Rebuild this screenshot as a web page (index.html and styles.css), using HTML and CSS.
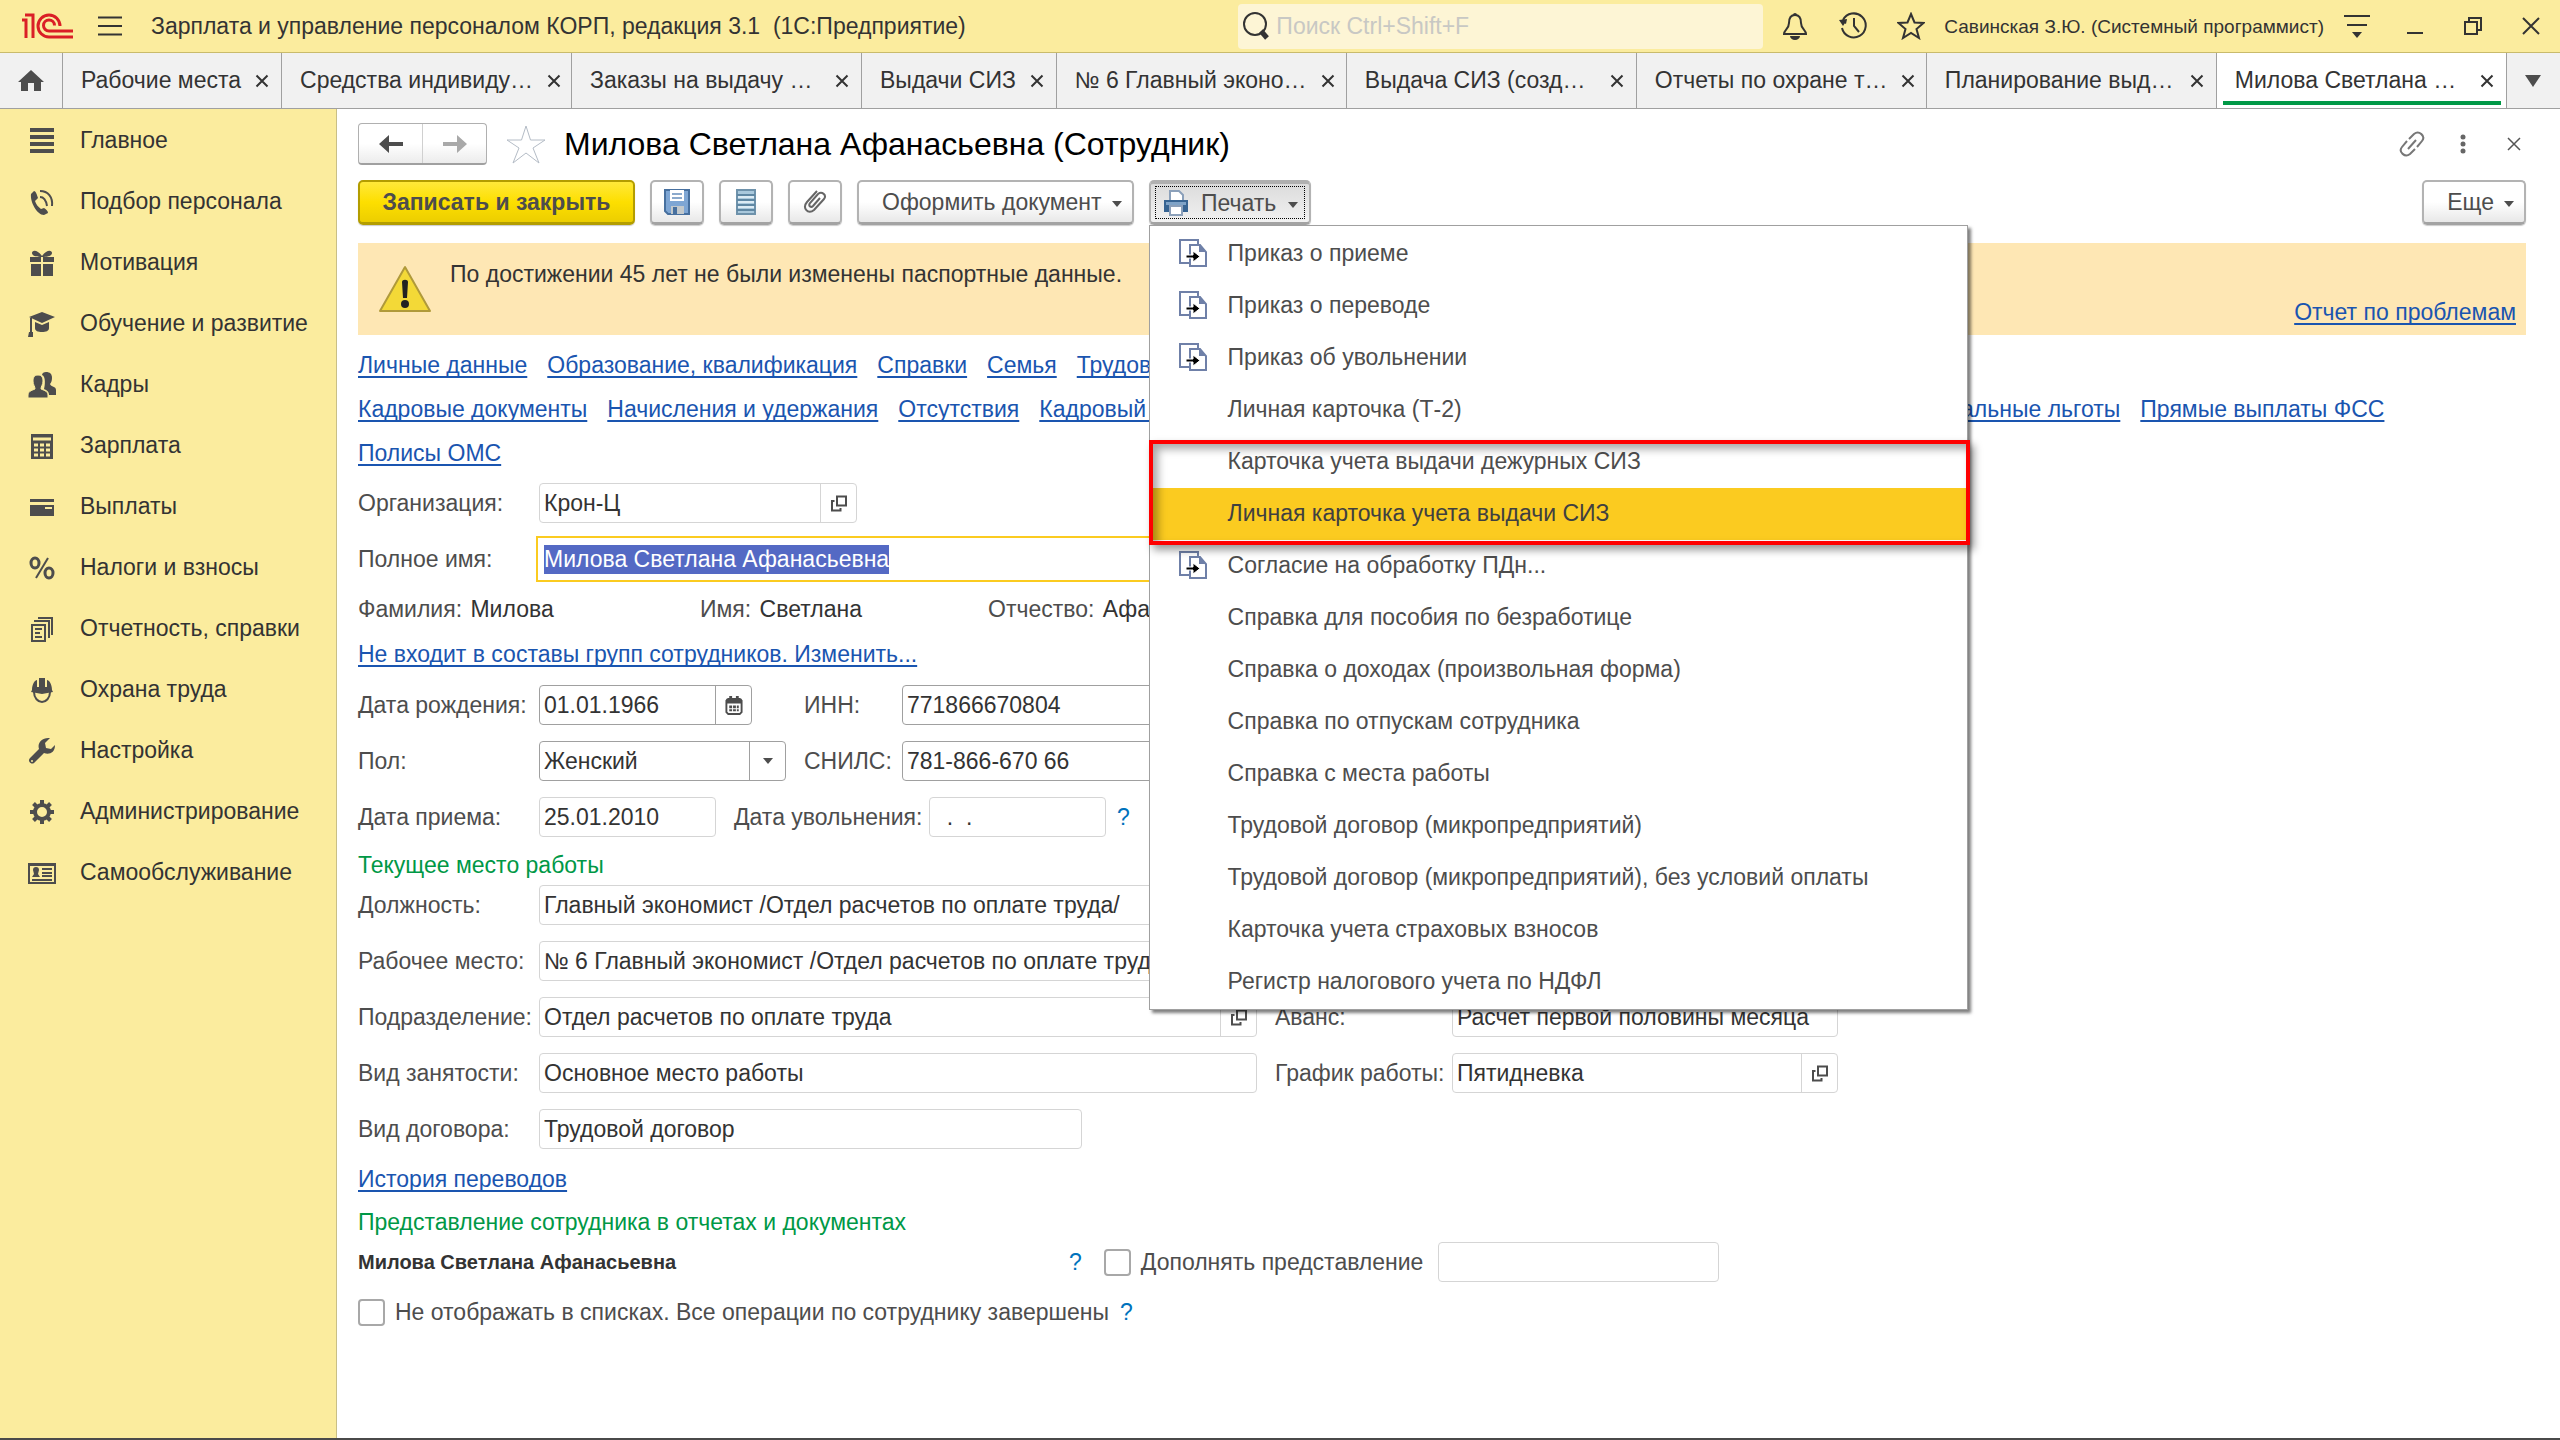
FILE: index.html
```html
<!DOCTYPE html>
<html lang="ru">
<head>
    <meta charset="UTF-8">
    <meta name="viewport" content="width=device-width, initial-scale=1.0">
    <title>Милова Светлана Афанасьевна (Сотрудник)</title>
    <link rel="stylesheet" href="styles.css">
</head>
<body>
    <!-- Общие значки -->
    <svg class="sprite" aria-hidden="true">
        <symbol id="i-close" viewBox="0 0 14 14"><path d="M1.5 1.5l11 11M12.5 1.5l-11 11" fill="none" stroke="currentColor" stroke-width="2"/></symbol>
        <symbol id="i-open" viewBox="0 0 18 18"><path d="M7 2h9v9H7z" fill="none" stroke="currentColor" stroke-width="2"/><path d="M4.500 6.500H2V16h8.500v-2.500" fill="none" stroke="currentColor" stroke-width="2"/></symbol>
        <symbol id="i-down" viewBox="0 0 10 6"><path d="M0 0h10L5 6z" fill="currentColor"/></symbol>
        <symbol id="i-print-doc" viewBox="0 0 28 28">
            <path d="M10 24H1V1h18v4" fill="none" stroke="#6f80a8" stroke-width="2"/>
            <path d="M11 6h10l6 7v14H11z" fill="#fff" stroke="#6f80a8" stroke-width="2"/>
            <path d="M20 6l7 7h-7z" fill="#6f80a8"/>
            <path d="M7 16h7v-4l7 5.500-7 5.500v-4H7z" fill="#000" stroke="#fff" stroke-width="1"/>
        </symbol>
    </svg>

    <header class="titlebar">
        <svg class="logo" viewBox="0 0 52 26" aria-label="1С">
            <path d="M0 7h4v18M3 2h8v23" fill="none" stroke="#da1f26" stroke-width="3"/>
            <path d="M51 24H27a11 11 0 1 1 11-11" fill="none" stroke="#da1f26" stroke-width="3"/>
            <path d="M51 18H27a5.500 5.500 0 1 1 5.500-5.500" fill="none" stroke="#da1f26" stroke-width="3"/>
        </svg>
        <button class="icon-btn burger" aria-label="Главное меню">
            <svg width="24" height="20" viewBox="0 0 24 20"><path d="M0 1.500h24M0 10h24M0 18.500h24" stroke="currentColor" stroke-width="2"/></svg>
        </button>
        <span class="app-title">Зарплата и управление персоналом КОРП, редакция 3.1&nbsp; (1С:Предприятие)</span>
        <label class="search">
            <svg width="28" height="28" viewBox="0 0 28 28"><circle cx="13" cy="12" r="11" fill="none" stroke="#333" stroke-width="2"/><path d="M19 19l6 7" stroke="#333" stroke-width="5"/></svg>
            <input type="search" placeholder="Поиск Ctrl+Shift+F" aria-label="Поиск">
        </label>
        <button class="icon-btn title-slot" aria-label="Уведомления">
            <svg width="26" height="28" viewBox="0 0 26 28"><path d="M13 3C8 3 7 7 7 11c0 6-5 7-5 11h22c0-4-5-5-5-11 0-4-1-8-6-8z" fill="none" stroke="currentColor" stroke-width="2"/><path d="M11 3a2 2 0 0 1 4 0zM8 24h10a5 4 0 0 1-10 0z" fill="currentColor"/></svg>
        </button>
        <button class="icon-btn title-slot" aria-label="История">
            <svg width="28" height="28" viewBox="0 0 28 28"><path d="M4 8a12 12 0 1 1-1 8" fill="none" stroke="currentColor" stroke-width="2"/><path d="M0 8h8l-4 6zM0 8l8-1-1 5z" fill="currentColor"/><path d="M15 6v8l5 6" fill="none" stroke="currentColor" stroke-width="2"/></svg>
        </button>
        <button class="icon-btn title-slot" aria-label="Избранное">
            <svg width="28" height="28" viewBox="0 0 28 28"><path d="M14 2l3.500 8.500 9 .500-7 6 2.500 9-8-5-8 5 2.500-9-7-6 9-.500z" fill="none" stroke="currentColor" stroke-width="2"/></svg>
        </button>
        <span class="user">Савинская З.Ю. (Системный программист)</span>
        <button class="icon-btn title-slot" aria-label="Сервис">
            <svg width="26" height="24" viewBox="0 0 26 24"><path d="M0 2h26M3 11h20" stroke="currentColor" stroke-width="2"/><path d="M8 18h10l-5 6z" fill="currentColor"/></svg>
        </button>
        <button class="icon-btn title-slot" aria-label="Свернуть">
            <svg width="18" height="20" viewBox="0 0 18 20"><path d="M1 17h16" stroke="currentColor" stroke-width="2"/></svg>
        </button>
        <button class="icon-btn title-slot" aria-label="Развернуть">
            <svg width="18" height="18" viewBox="0 0 18 18"><path d="M1 5h12v12H1z M5 5V1h12v12h-4" fill="none" stroke="currentColor" stroke-width="2"/></svg>
        </button>
        <button class="icon-btn title-slot" aria-label="Закрыть">
            <svg width="18" height="18" viewBox="0 0 18 18"><path d="M1 1l16 16M17 1L1 17" stroke="currentColor" stroke-width="2"/></svg>
        </button>
    </header>

    <nav class="tabs">
        <button class="tab-home" aria-label="Начальная страница">
            <svg width="26" height="22" viewBox="0 0 26 22"><path d="M13 0L0 12h3v9h7v-8h6v8h7v-9h3z" fill="currentColor"/></svg>
        </button>
        <div class="tab"><span>Рабочие места</span><button class="tab-close" aria-label="Закрыть"><svg><use href="#i-close"/></svg></button></div>
        <div class="tab tab-wide"><span>Средства индивиду…</span><button class="tab-close" aria-label="Закрыть"><svg><use href="#i-close"/></svg></button></div>
        <div class="tab tab-wide"><span>Заказы на выдачу …</span><button class="tab-close" aria-label="Закрыть"><svg><use href="#i-close"/></svg></button></div>
        <div class="tab"><span>Выдачи СИЗ</span><button class="tab-close" aria-label="Закрыть"><svg><use href="#i-close"/></svg></button></div>
        <div class="tab tab-wide"><span>№ 6 Главный эконо…</span><button class="tab-close" aria-label="Закрыть"><svg><use href="#i-close"/></svg></button></div>
        <div class="tab tab-wide"><span>Выдача СИЗ (созд…</span><button class="tab-close" aria-label="Закрыть"><svg><use href="#i-close"/></svg></button></div>
        <div class="tab tab-wide"><span>Отчеты по охране т…</span><button class="tab-close" aria-label="Закрыть"><svg><use href="#i-close"/></svg></button></div>
        <div class="tab tab-wide"><span>Планирование выд…</span><button class="tab-close" aria-label="Закрыть"><svg><use href="#i-close"/></svg></button></div>
        <div class="tab tab-wide tab-active"><span>Милова Светлана …</span><button class="tab-close" aria-label="Закрыть"><svg><use href="#i-close"/></svg></button></div>
        <button class="tab-more" aria-label="Все вкладки"><svg width="16" height="12" viewBox="0 0 10 6" preserveAspectRatio="none"><path d="M0 0h10L5 6z" fill="currentColor"/></svg></button>
    </nav>

    <div class="workspace">
        <aside class="sidebar">
            <a href="#"><svg viewBox="0 0 28 28"><path d="M2 3h24M2 10h24M2 17h24M2 24h24" stroke="currentColor" stroke-width="4"/></svg>Главное</a>
            <a href="#"><svg viewBox="0 0 28 28"><path d="M3 6l3-3c2 0 3 4 4 7l-3 3c1 3 3 6 6 8l3-1c2 1 4 3 4 5l-4 2C9 27 2 14 3 6z" fill="currentColor"/><path d="M12 9c4 0 6 3 7 9M12 3c8 0 13 6 12 15" fill="none" stroke="currentColor" stroke-width="2"/></svg>Подбор персонала</a>
            <a href="#"><svg viewBox="0 0 28 28"><path d="M2 8h24v5H2zM3 15h10v12H3zM15 15h10v12H15zM14 8C9 8 4 7 4 4s5-4 10 3c5-7 10-6 10-3s-5 4-10 4z" fill="currentColor"/><path d="M14 8v19" stroke="#fbec9e" stroke-width="2"/></svg>Мотивация</a>
            <a href="#"><svg viewBox="0 0 28 28"><path d="M14 2l13 5-13 6L1 7zM7 12l7 3 7-3v6c0 3-3 4-7 4s-7-1-7-4zM0 27l1-5h4v5z" fill="currentColor"/><path d="M3 8v15" stroke="currentColor" stroke-width="2"/></svg>Обучение и развитие</a>
            <a href="#"><svg viewBox="0 0 28 28"><path d="M18 1c4 0 6 2 6 6 0 3-1 5-2 6 1 3 6 2 6 6v5h-7c0-4-3-5-5-6 1-3 2-13-2-14 0-2 2-3 4-3z" fill="currentColor"/><path d="M10 4c4 0 5 3 5 6 0 4-2 5-2 8 2 1 7 2 7 6v3H0v-3c0-4 5-5 7-6 0-3-2-4-2-8 0-3 1-6 5-6z" fill="currentColor" stroke="#fbec9e" stroke-width="1"/></svg>Кадры</a>
            <a href="#"><svg viewBox="0 0 28 28"><path d="M3 2h22v25H3z" fill="currentColor"/><path d="M5 7h18M6 13h4M12 13h4M18 13h4M6 18h4M12 18h4M18 18h4M6 23h4M12 23h4M18 23h4" stroke="#fbec9e" stroke-width="3"/></svg>Зарплата</a>
            <a href="#"><svg viewBox="0 0 28 28"><path d="M2 6h24v3H2zM2 12h24v11H2z" fill="currentColor"/><path d="M17 15h7" stroke="#fbec9e" stroke-width="2"/></svg>Выплаты</a>
            <a href="#"><svg viewBox="0 0 28 28"><ellipse cx="7" cy="9" rx="4" ry="5" fill="none" stroke="currentColor" stroke-width="3"/><ellipse cx="21" cy="19" rx="4" ry="5" fill="none" stroke="currentColor" stroke-width="3"/><path d="M20 4L8 24" stroke="currentColor" stroke-width="2"/></svg>Налоги и взносы</a>
            <a href="#"><svg viewBox="0 0 28 28"><path d="M4 10h13v16H4zM6 6h15v17M10 3h14v17M7 14h7M7 18h5M7 22h7" fill="none" stroke="currentColor" stroke-width="2"/></svg>Отчетность, справки</a>
            <a href="#"><svg viewBox="0 0 28 28"><path d="M4 14C4 8 7 4 9 4v7h2V2h6v9h2V4c2 0 5 4 5 10l1 2-11 2-11-2z" fill="currentColor"/><path d="M6 16c0 6 4 10 8 10s8-4 8-10" fill="none" stroke="currentColor" stroke-width="2"/></svg>Охрана труда</a>
            <a href="#"><svg viewBox="0 0 28 28"><path d="M22 1l-5 5 1 5 5 1 4-4c0 8-6 10-11 8L6 26c-3 2-7-2-4-5l9-9C9 6 14 0 22 1z" fill="currentColor"/><circle cx="4" cy="24" r="1" fill="#fbec9e"/></svg>Настройка</a>
            <a href="#"><svg viewBox="0 0 28 28"><circle cx="14" cy="14" r="7" fill="none" stroke="currentColor" stroke-width="4"/><path d="M14 2v4M14 22v4M2 14h4M22 14h4M5.500 5.500l3 3M19.500 19.500l3 3M22.500 5.500l-3 3M8.500 19.500l-3 3" stroke="currentColor" stroke-width="4"/></svg>Администрирование</a>
            <a href="#"><svg viewBox="0 0 28 28"><path d="M1 5h26v19H1z" fill="none" stroke="currentColor" stroke-width="2"/><path d="M0 4h28v3H0zM8 8c2 0 3 1 3 3l-1 4 2 3H4l2-3-1-4c0-2 1-3 3-3z" fill="currentColor"/><path d="M14 10h10M14 14h10M14 17h10M4 21h20" stroke="currentColor" stroke-width="2"/></svg>Самообслуживание</a>
        </aside>

        <main class="content">
            <div class="form-head">
                <div class="nav-buttons">
                    <button aria-label="Назад"><svg width="24" height="18" viewBox="0 0 24 18"><path d="M0 9l10-9v7h14v4H10v7z" fill="#4d4d4d"/></svg></button>
                    <button aria-label="Вперед"><svg width="24" height="18" viewBox="0 0 24 18"><path d="M24 9L14 0v7H0v4h14v7z" fill="#a9a9a9"/></svg></button>
                </div>
                <svg class="star" viewBox="0 0 40 40"><path d="M20 2l4.500 14H39L27 24l6 15-13-10L7 39l6-15L1 16h14.500z" fill="none" stroke="#b4bcc6" stroke-width="1"/></svg>
                <h1>Милова Светлана Афанасьевна (Сотрудник)</h1>
                <div class="head-icons">
                    <button class="icon-btn" aria-label="Ссылка"><svg width="26" height="26" viewBox="0 0 26 26"><path d="M10 8l5-5c5-4 12 2 8 7l-5 6M16 18l-5 5c-5 4-12-2-8-7l5-6M9 18l8-9" fill="none" stroke="#777" stroke-width="2"/></svg></button>
                    <button class="icon-btn" aria-label="Меню"><svg width="24" height="20" viewBox="0 0 24 20"><circle cx="12" cy="3" r="2.500" fill="#666"/><circle cx="12" cy="10" r="2.500" fill="#666"/><circle cx="12" cy="17" r="2.500" fill="#666"/></svg></button>
                    <button class="icon-btn" aria-label="Закрыть"><svg width="14" height="14" viewBox="0 0 14 14"><path d="M1 1l12 12M13 1L1 13" stroke="#555" stroke-width="1.500"/></svg></button>
                </div>
            </div>

            <div class="toolbar">
                <button class="btn btn-main">Записать и закрыть</button>
                <button class="btn btn-icon" aria-label="Записать">
                    <svg width="26" height="26" viewBox="0 0 26 26"><path d="M1 1h24v24H4l-3-3z" fill="#7ea6d4" stroke="#47709f" stroke-width="2"/><path d="M6 1h14v11H6z" fill="#fff"/><path d="M8 5h10M8 9h10" stroke="#8ba9cc" stroke-width="2"/><path d="M7 17h13v8H7z" fill="#c3c9cc"/><path d="M9 18h4v7H9z" fill="#47709f"/></svg>
                </button>
                <button class="btn btn-icon" aria-label="Список">
                    <svg width="20" height="26" viewBox="0 0 20 26"><path d="M1 1h18v24H1z" fill="#a9c8dc" stroke="#6e92ab" stroke-width="2"/><path d="M1 6h18M1 11h18M1 16h18M1 21h18" stroke="#5f87a3" stroke-width="2"/><path d="M2 8h16M2 13h16M2 18h16" stroke="#dcebf4" stroke-width="2"/></svg>
                </button>
                <button class="btn btn-icon" aria-label="Файлы">
                    <svg width="26" height="26" viewBox="0 0 26 26"><path d="M15 2L5 13c-5 6 1 13 7 8l10-11c3-4-2-8-6-5l-8 9c-2 3 1 5 3 3l7-8" fill="none" stroke="#666" stroke-width="2"/></svg>
                </button>
                <button class="btn btn-menu">Оформить документ<svg class="caret"><use href="#i-down"/></svg></button>
                <div class="print">
                    <button class="btn btn-pressed">
                        <svg width="26" height="26" viewBox="0 0 26 26"><path d="M7 1h9l4 4v6H7z" fill="#fff" stroke="#8ba0ba" stroke-width="2"/><path d="M1 10h24v12H1z" fill="#376492"/><path d="M3 12h20v3H3z" fill="#7fa3c7"/><path d="M7 16h12v9H7z" fill="#fff" stroke="#8ba0ba" stroke-width="2"/></svg>
                        Печать<svg class="caret"><use href="#i-down"/></svg>
                    </button>
                    <div class="menu" role="menu">
                        <button role="menuitem"><svg><use href="#i-print-doc"/></svg>Приказ о приеме</button>
                        <button role="menuitem"><svg><use href="#i-print-doc"/></svg>Приказ о переводе</button>
                        <button role="menuitem"><svg><use href="#i-print-doc"/></svg>Приказ об увольнении</button>
                        <button role="menuitem">Личная карточка (Т-2)</button>
                        <button role="menuitem">Карточка учета выдачи дежурных СИЗ</button>
                        <button role="menuitem" class="current">Личная карточка учета выдачи СИЗ</button>
                        <button role="menuitem"><svg><use href="#i-print-doc"/></svg>Согласие на обработку ПДн...</button>
                        <button role="menuitem">Справка для пособия по безработице</button>
                        <button role="menuitem">Справка о доходах (произвольная форма)</button>
                        <button role="menuitem">Справка по отпускам сотрудника</button>
                        <button role="menuitem">Справка с места работы</button>
                        <button role="menuitem">Трудовой договор (микропредприятий)</button>
                        <button role="menuitem">Трудовой договор (микропредприятий), без условий оплаты</button>
                        <button role="menuitem">Карточка учета страховых взносов</button>
                        <button role="menuitem">Регистр налогового учета по НДФЛ</button>
                        <div class="marker"></div>
                    </div>
                </div>
                <button class="btn btn-menu btn-more">Еще<svg class="caret"><use href="#i-down"/></svg></button>
            </div>

            <div class="warning">
                <svg width="54" height="48" viewBox="0 0 54 48"><path d="M27 2L2 46h50z" fill="#f3d937" stroke="#b09a3a" stroke-width="2" stroke-linejoin="round"/><path d="M24 17c0-3 6-3 6 0l-1 16h-4z" fill="#222"/><circle cx="27" cy="39" r="4" fill="#222"/></svg>
                <p>По достижении 45 лет не были изменены паспортные данные.</p>
                <a href="#">Отчет по проблемам</a>
            </div>

            <div class="links">
                <div><a href="#">Личные данные</a><a href="#">Образование, квалификация</a><a href="#">Справки</a><a href="#">Семья</a><a href="#">Трудовая</a></div>
                <div><a href="#">Кадровые документы</a><a href="#">Начисления и удержания</a><a href="#">Отсутствия</a><a href="#" class="link-reserve">Кадровый резерв</a><a href="#">Социальные льготы</a><a href="#">Прямые выплаты ФСС</a></div>
                <div><a href="#">Полисы ОМС</a></div>
            </div>

            <form class="form">
                <div class="row">
                    <label class="cap" for="org">Организация:</label>
                    <div class="field w-org"><input id="org" value="Крон-Ц" readonly><button type="button" aria-label="Открыть"><svg><use href="#i-open"/></svg></button></div>
                </div>
                <div class="row">
                    <label class="cap" for="fullname">Полное имя:</label>
                    <div class="field field-focus w-long"><input id="fullname" value="Милова Светлана Афанасьевна"></div>
                </div>
                <div class="row row-text names">
                    <span>Фамилия: <b>Милова</b></span>
                    <span>Имя: <b>Светлана</b></span>
                    <span>Отчество: <b>Афанасьевна</b></span>
                </div>
                <div class="row row-text"><a href="#">Не входит в составы групп сотрудников. Изменить...</a></div>
                <div class="row">
                    <label class="cap" for="birth">Дата рождения:</label>
                    <div class="pair">
                        <div class="field field-edit w-date-btn"><input id="birth" value="01.01.1966"><button type="button" aria-label="Календарь"><svg viewBox="0 0 18 20"><path d="M3 3h12l2 2v12l-2 2H3l-2-2V5z" fill="none" stroke="currentColor" stroke-width="2"/><path d="M1 3h16v5H1zM4 0h3v4H4zM11 0h3v4h-3zM4 10h3v3H4zM8 10h3v3H8zM12 10h2v3h-2zM4 14h3v2H4zM8 14h3v2H8zM12 14h2v2h-2z" fill="currentColor"/></svg></button></div>
                    </div>
                    <label class="cap-short" for="inn">ИНН:</label>
                    <div class="field field-edit w-num"><input id="inn" value="771866670804"></div>
                </div>
                <div class="row">
                    <label class="cap" for="sex">Пол:</label>
                    <div class="pair">
                        <div class="field field-edit w-sex"><select id="sex"><option>Женский</option><option>Мужской</option></select><span class="drop"><svg class="caret"><use href="#i-down"/></svg></span></div>
                    </div>
                    <label class="cap-short" for="snils">СНИЛС:</label>
                    <div class="field field-edit w-num"><input id="snils" value="781-866-670 66"></div>
                </div>
                <div class="row">
                    <label class="cap" for="hired">Дата приема:</label>
                    <div class="field w-date"><input id="hired" value="25.01.2010" readonly></div>
                    <label class="cap-fired" for="fired">Дата увольнения:</label>
                    <div class="field w-date"><input id="fired" value="  .  ." readonly></div>
                    <button type="button" class="help">?</button>
                </div>

                <h2>Текущее место работы</h2>
                <div class="row">
                    <label class="cap" for="post">Должность:</label>
                    <div class="field w-long"><input id="post" value="Главный экономист /Отдел расчетов по оплате труда/" readonly></div>
                </div>
                <div class="row">
                    <label class="cap" for="place">Рабочее место:</label>
                    <div class="field w-long"><input id="place" value="№ 6 Главный экономист /Отдел расчетов по оплате труда/" readonly></div>
                </div>
                <div class="row">
                    <label class="cap" for="dept">Подразделение:</label>
                    <div class="field w-long"><input id="dept" value="Отдел расчетов по оплате труда" readonly><button type="button" aria-label="Открыть"><svg><use href="#i-open"/></svg></button></div>
                    <label class="cap-right" for="advance">Аванс:</label>
                    <div class="field w-right"><input id="advance" value="Расчет первой половины месяца" readonly></div>
                </div>
                <div class="row">
                    <label class="cap" for="kind">Вид занятости:</label>
                    <div class="field w-long"><input id="kind" value="Основное место работы" readonly></div>
                    <label class="cap-right" for="schedule">График работы:</label>
                    <div class="field w-right"><input id="schedule" value="Пятидневка" readonly><button type="button" aria-label="Открыть"><svg><use href="#i-open"/></svg></button></div>
                </div>
                <div class="row">
                    <label class="cap" for="contract">Вид договора:</label>
                    <div class="field w-contract"><input id="contract" value="Трудовой договор" readonly></div>
                </div>
                <div class="row row-text"><a href="#">История переводов</a></div>

                <h2>Представление сотрудника в отчетах и документах</h2>
                <div class="row">
                    <strong class="present">Милова Светлана Афанасьевна</strong>
                    <button type="button" class="help">?</button>
                    <label class="check check-extra"><input type="checkbox">Дополнять представление</label>
                    <div class="field w-extra"><input aria-label="Дополнение представления"></div>
                </div>
                <div class="row row-text">
                    <label class="check"><input type="checkbox">Не отображать в списках. Все операции по сотруднику завершены</label>
                    <button type="button" class="help">?</button>
                </div>
            </form>
        </main>
    </div>

    <script>
        // При открытии формы курсор стоит в полном имени
        const fullname = document.getElementById('fullname');
        fullname.focus({ preventScroll: true });
        fullname.select();
    </script>
</body>
</html>
```
FILE: styles.css
```css
/* Общие стили */
* {
    box-sizing: border-box;
}

body {
    margin: 0;
    min-height: 100vh;
    display: flex;
    flex-direction: column;
    font-family: "Liberation Sans", Arial, sans-serif;
    font-size: 23px;
    line-height: 29px;
    color: #333;
    background-color: #fff;
    border-bottom: 2px solid #4a4a4a;
}

button, input, select {
    font: inherit;
    color: inherit;
    margin: 0;
    padding: 0;
    border: none;
    border-radius: 0;
    background: none;
    outline: none;
}

a {
    color: #1a55b0;
    text-decoration: underline;
    text-decoration-thickness: 2px;
    text-underline-offset: 3px;
    text-decoration-skip-ink: none;
    white-space: nowrap;
}

svg {
    display: block;
    flex: none;
}

.sprite {
    position: absolute;
    width: 0;
    height: 0;
}

.icon-btn {
    display: flex;
    align-items: center;
    justify-content: center;
}

.caret {
    width: 10px;
    height: 6px;
}

/* Заголовок окна */
.titlebar {
    display: flex;
    align-items: center;
    height: 53px;
    padding-left: 22px;
    background-color: #fbec9e;
    border-bottom: 1px solid #c9bb6c;
}

.logo {
    width: 52px;
    height: 26px;
}

.burger {
    margin: 0 29px 0 24px;
}

.app-title {
    white-space: nowrap;
}

.search {
    display: flex;
    align-items: center;
    gap: 6px;
    width: 525px;
    height: 45px;
    margin: 0 3px 0 auto;
    padding-left: 4px;
    border-radius: 4px;
    background-color: #fdf5d5;
}

.search input {
    flex: 1;
    min-width: 0;
}

.search input::placeholder {
    color: #c8c8c4;
    opacity: 1;
}

.title-slot {
    width: 58px;
    height: 52px;
}

.user {
    padding: 0 4px;
    font-size: 19px;
    white-space: nowrap;
}

/* Вкладки */
.tabs {
    display: flex;
    height: 56px;
    background-color: #f1f1f1;
    border-bottom: 1px solid #a0a0a0;
}

.tab-home {
    display: flex;
    align-items: center;
    justify-content: center;
    width: 63px;
    color: #4d4d4d;
    border-right: 1px solid #a0a0a0;
}

.tab {
    position: relative;
    display: flex;
    align-items: center;
    justify-content: space-between;
    gap: 8px;
    padding: 0 6px 0 18px;
    border-right: 1px solid #a0a0a0;
    white-space: nowrap;
}

.tab-wide {
    width: 290px;
}

.tab-active {
    background-color: #fff;
}

.tab-active::after {
    content: "";
    position: absolute;
    left: 6px;
    right: 5px;
    bottom: 3px;
    height: 4px;
    background-color: #009846;
}

.tab-close {
    padding: 6px;
}

.tab-close svg {
    width: 14px;
    height: 14px;
}

.tab-more {
    flex: 1;
    display: flex;
    align-items: center;
    justify-content: center;
    color: #4d4d4d;
}

/* Панель разделов */
.workspace {
    flex: 1;
    display: flex;
}

.sidebar {
    flex: none;
    width: 337px;
    padding-top: 1px;
    background-color: #fbec9e;
    border-right: 1px solid #c9bf86;
}

.sidebar a {
    display: flex;
    align-items: center;
    gap: 24px;
    height: 61px;
    padding-left: 28px;
    color: #333;
    text-decoration: none;
}

.sidebar svg {
    width: 28px;
    height: 28px;
    color: #4d4d4d;
}

/* Форма */
.content {
    flex: 1;
    min-width: 0;
    padding: 14px 34px 14px 21px;
}

.form-head {
    display: flex;
    align-items: center;
    height: 42px;
}

.nav-buttons {
    display: flex;
    width: 129px;
    height: 42px;
    border: 1px solid #b0b0b0;
    border-bottom: 2px solid #a0a0a0;
    border-radius: 4px;
    background: linear-gradient(#fff 50%, #ececec);
}

.nav-buttons button {
    flex: 1;
    display: flex;
    align-items: center;
    justify-content: center;
}

.nav-buttons button + button {
    border-left: 1px solid #d0d0d0;
}

.star {
    width: 40px;
    height: 40px;
    margin: 0 18px 0 19px;
}

h1 {
    margin: 0;
    font-size: 32px;
    font-weight: normal;
    line-height: 40px;
    color: #000;
    white-space: nowrap;
}

.head-icons {
    display: flex;
    gap: 27px;
    margin-left: auto;
}

.head-icons .icon-btn {
    width: 24px;
}

/* Командная панель */
.toolbar {
    display: flex;
    gap: 15px;
    margin-top: 15px;
}

.btn {
    display: flex;
    align-items: center;
    justify-content: center;
    height: 45px;
    color: #4d4d4d;
    border: 2px solid #b3b3b3;
    border-bottom: 3px solid #a3a3a3;
    border-radius: 5px;
    background: linear-gradient(#fff 50%, #e8e8e8);
    box-shadow: 0 1px 1px #ccc;
    white-space: nowrap;
}

.btn .caret {
    margin-top: 3px;
}

.btn-main {
    width: 277px;
    font-weight: bold;
    border-color: #b39d00;
    background: linear-gradient(#ffe93a, #fddf00 50%, #ecce00);
}

.btn-icon {
    width: 54px;
}

.btn-menu {
    gap: 10px;
    padding: 0 10px 0 23px;
}

.btn-more {
    margin-left: auto;
}

.print {
    position: relative;
}

.btn-pressed {
    gap: 12px;
    width: 162px;
    padding-left: 2px;
    border-top: 4px solid #b0b0b0;
    background: linear-gradient(#dcdcdc, #f1f1f1);
    outline: 1px dotted #000;
    outline-offset: -7px;
}

/* Меню печати */
.menu {
    position: absolute;
    z-index: 10;
    top: 100%;
    left: 0;
    width: 819px;
    padding: 2px 1px 1px;
    border: 1px solid #a0a0a0;
    background-color: #fff;
    box-shadow: 3px 3px 3px rgba(0, 0, 0, 0.5);
}

.menu button {
    position: relative;
    display: flex;
    align-items: center;
    width: 100%;
    height: 52px;
    padding: 0 0 2px 77px;
    color: #4d4d4d;
    white-space: nowrap;
}

.menu button svg {
    width: 28px;
    height: 28px;
    margin: 0 21px 0 -49px;
}

.menu .current {
    color: #404040;
    background-color: #fbcb20;
}

.marker {
    position: absolute;
    top: 214px;
    left: -1px;
    right: -3px;
    height: 105px;
    border: 4px solid #fe0000;
    box-shadow: 4px 5px 8px rgba(0, 0, 0, 0.4), inset 5px 5px 8px rgba(0, 0, 0, 0.35);
    pointer-events: none;
}

/* Предупреждение */
.warning {
    display: flex;
    height: 92px;
    margin-top: 18px;
    padding: 0 10px 0 20px;
    background-color: #fee7b4;
}

.warning svg {
    align-self: center;
}

.warning p {
    margin: 17px 0 0 18px;
}

.warning a {
    align-self: flex-end;
    margin: 0 0 8px auto;
}

/* Ссылки на связанные данные */
.links {
    margin: 8px 0;
    line-height: 44px;
}

.links div {
    display: flex;
    gap: 20px;
}

.link-reserve {
    margin-right: 660px;
}

/* Поля */
.form {
    display: flex;
    flex-direction: column;
    gap: 16px;
    color: #4d4d4d;
}

.row {
    display: flex;
    align-items: center;
    height: 40px;
}

.row-text {
    height: 29px;
}

.cap {
    width: 181px;
    white-space: nowrap;
}

.cap-short {
    width: 98px;
}

.cap-right {
    width: 177px;
    margin-left: 18px;
}

.cap-fired {
    width: 195px;
    margin-left: 18px;
    white-space: nowrap;
}

.pair {
    width: 265px;
}

.field {
    display: flex;
    height: 40px;
    color: #333;
    border: 1px solid #d5d5d5;
    border-radius: 4px;
    background-color: #fff;
}

.field input, .field select {
    flex: 1;
    min-width: 0;
    padding: 0 4px;
    appearance: none;
}

.field button, .drop {
    display: flex;
    align-items: center;
    justify-content: center;
    width: 36px;
    color: #4d4d4d;
    border-left: 1px solid #d5d5d5;
}

.field button svg {
    width: 18px;
    height: 19px;
}

.field-edit, .field-edit button, .field-edit .drop {
    border-color: #a0a0a0;
}

.field-focus {
    border: 2px solid #fbcb20;
    border-radius: 0;
    height: 46px;
    margin-left: -3px;
}

.field-focus input {
    padding-left: 6px;
}

.field input::selection {
    color: #fff;
    background-color: #5469c4;
}

.w-org {
    width: 318px;
}

.w-long {
    width: 718px;
}

.w-date {
    width: 177px;
}

.w-date-btn {
    width: 213px;
}

.w-sex {
    width: 247px;
}

.w-num {
    width: 355px;
}

.w-right {
    width: 386px;
}

.w-contract {
    width: 543px;
}

.w-extra {
    width: 281px;
}

.names span {
    width: 288px;
}

.names span:first-child {
    width: 342px;
}

.names b {
    margin-left: 2px;
    font-weight: normal;
    color: #333;
}

h2 {
    margin: -2px 0 -11px;
    font-size: 23px;
    font-weight: normal;
    line-height: 29px;
    color: #009846;
}

.help {
    margin-left: 11px;
    color: #0072bc;
}

.present {
    width: 700px;
    font-size: 20px;
    color: #333;
}

.check {
    display: flex;
    align-items: center;
    gap: 10px;
    white-space: nowrap;
}

.check-extra {
    width: 334px;
    margin-left: 22px;
}

.check input {
    width: 27px;
    height: 27px;
    border: 2px solid #a8a8a8;
    border-radius: 4px;
    background-color: #fff;
    appearance: none;
}
```
